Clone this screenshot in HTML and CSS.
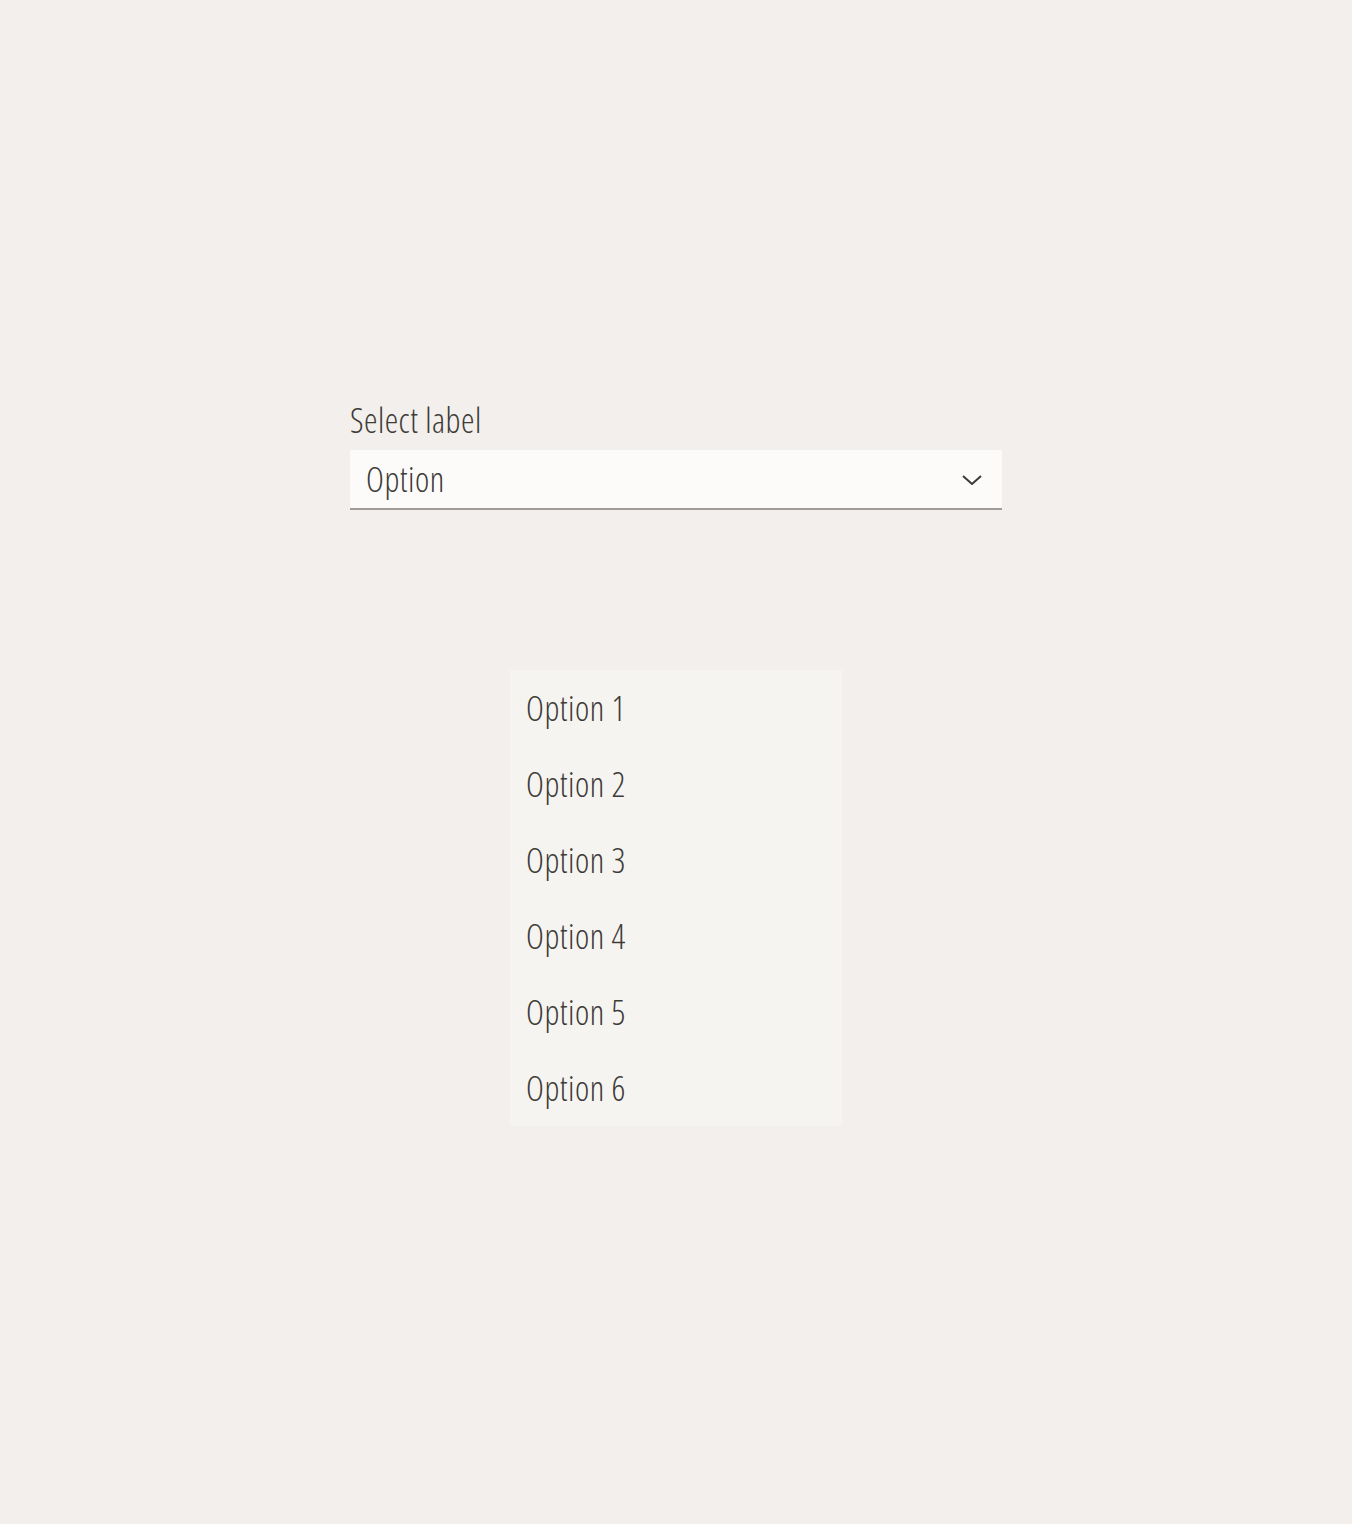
FILE: index.html
```html
<!DOCTYPE html>
<html lang="en">
<head>
    <meta charset="UTF-8">
    <meta name="viewport" content="width=device-width, initial-scale=1.0">
    <title>Select</title>
    <link rel="stylesheet" href="styles.css">
</head>
<body>
    <div class="page">
        <div class="field">
            <label class="field-label" for="select">Select label</label>
            <div class="select" id="select">
                <span class="select-value">Option</span>
                <svg class="chevron" width="20" height="10" viewBox="0 0 20 10">
                    <path d="M1 1 L10 9 L19 1" fill="none" stroke="#3e3b37" stroke-width="2"/>
                </svg>
            </div>
        </div>

        <ul class="menu">
            <li>Option 1</li>
            <li>Option 2</li>
            <li>Option 3</li>
            <li>Option 4</li>
            <li>Option 5</li>
            <li>Option 6</li>
        </ul>
    </div>
</body>
</html>
```
FILE: styles.css
```css
/* page */
body {
    margin: 0;
    padding: 0;
    background-color: #f2efec;
    font-family: "Open Sans", sans-serif;
    font-stretch: condensed;
    font-weight: 350;
    font-size: 34px;
    letter-spacing: 0.5px;
    color: #3e3b37;
}

.page {
    display: flex;
    flex-direction: column;
    align-items: center;
    padding-top: 402px;
    min-height: 1122px;
}

/* select field */
.field {
    width: 652px;
    display: flex;
    flex-direction: column;
    gap: 12px;
}

.field-label {
    line-height: 36px;
}

.select {
    display: flex;
    align-items: center;
    justify-content: space-between;
    height: 58px;
    padding: 0 20px 0 16px;
    background-color: #fcfbfa;
    border-bottom: 2px solid #a09c98;
}

.select-value {
    line-height: 58px;
}

.chevron {
    display: block;
    margin-top: 2px;
}

/* dropdown list */
.menu {
    list-style: none;
    margin: 160px 0 0;
    padding: 0;
    width: 332px;
    background-color: #f6f4f1;
}

.menu li {
    height: 76px;
    line-height: 76px;
    padding-left: 16px;
}
```
